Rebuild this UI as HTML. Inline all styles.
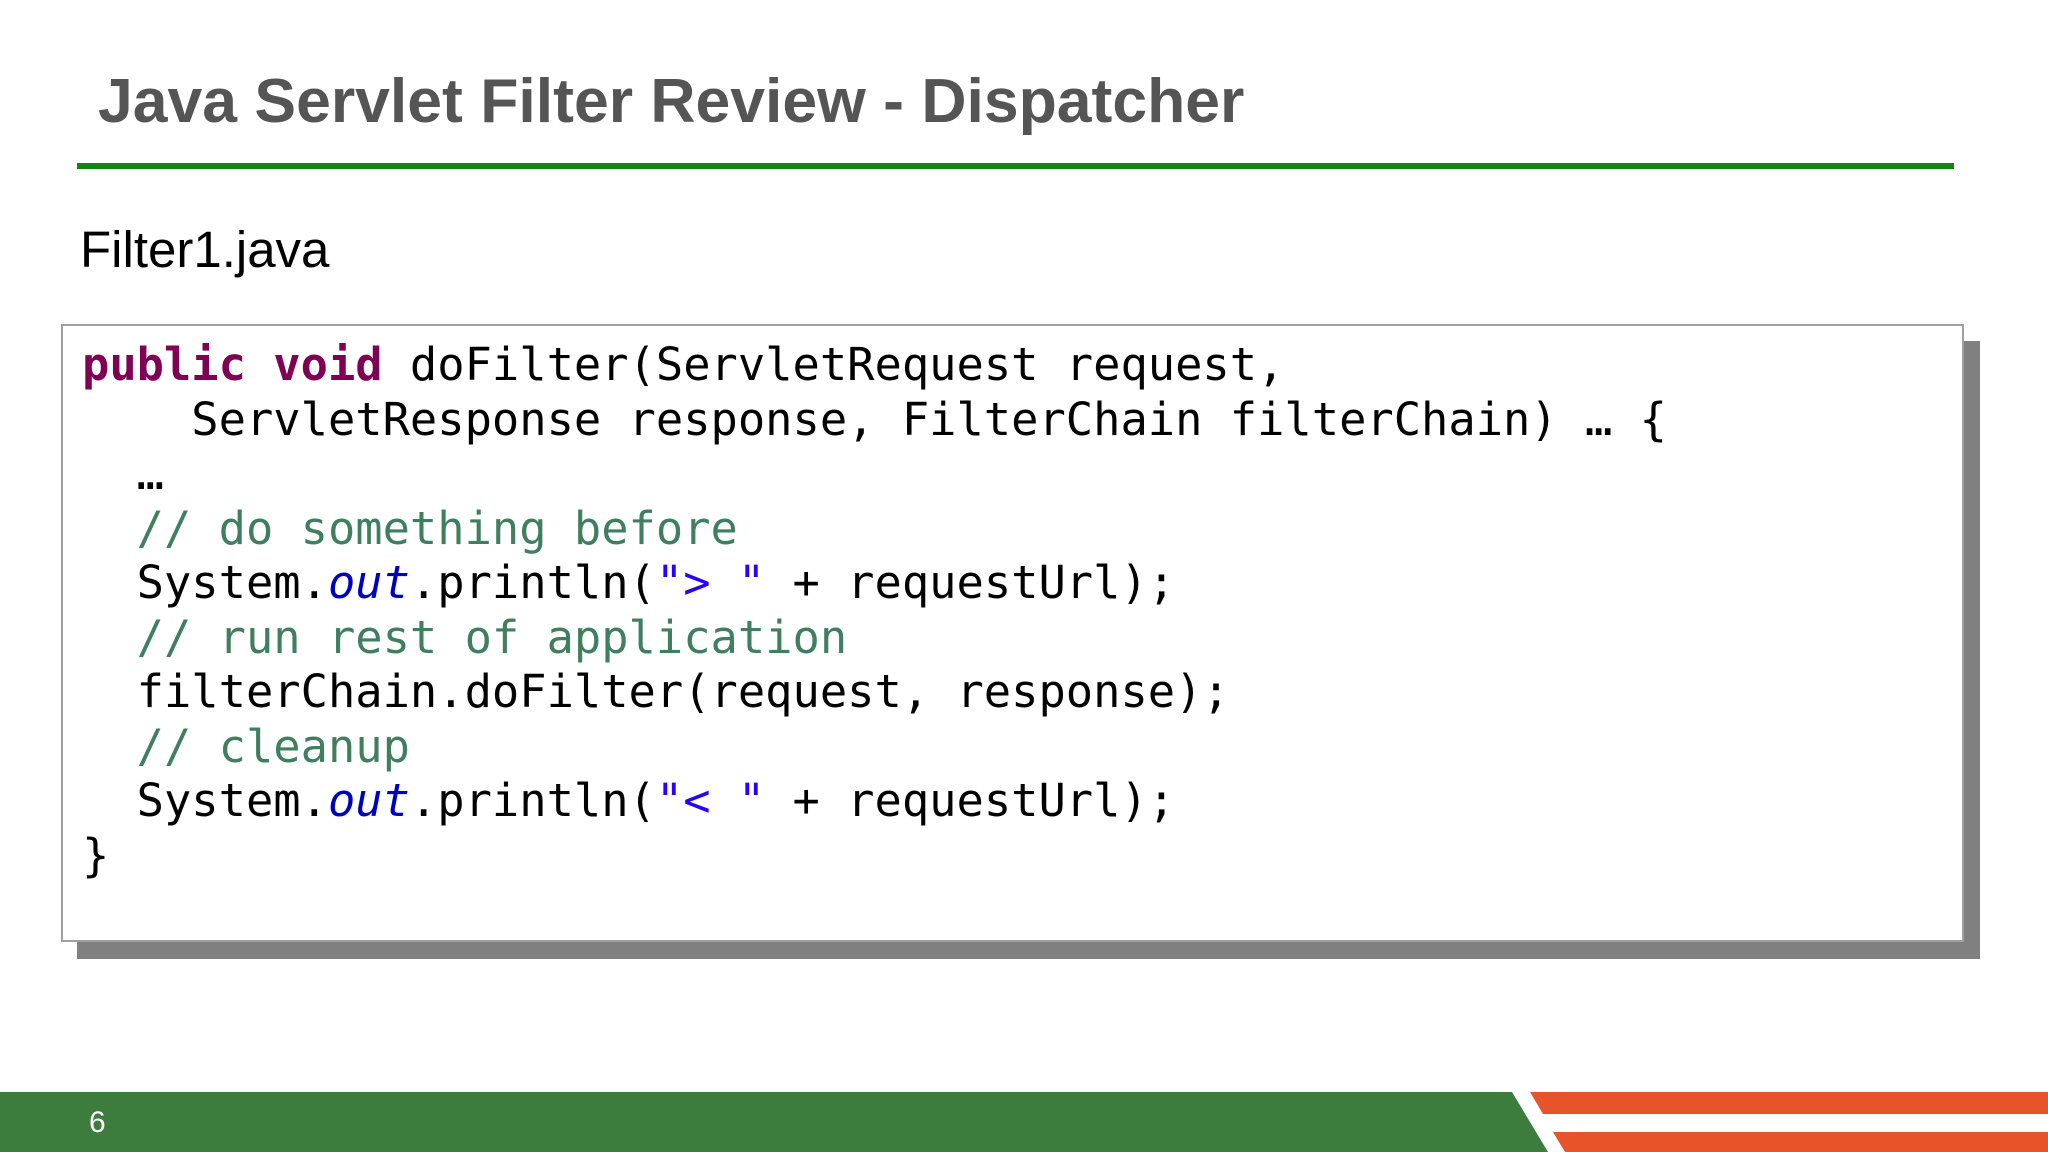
<!DOCTYPE html>
<html><head><meta charset="utf-8"><style>
html,body{margin:0;padding:0;background:#fff;}
body{width:2048px;height:1152px;position:relative;overflow:hidden;}
.title{position:absolute;left:98px;top:70px;font:bold 62.5px "Liberation Sans",sans-serif;color:#555;white-space:nowrap;line-height:1;}
.rule{position:absolute;left:77px;top:163px;width:1877px;height:6px;background:#138513;}
.sub{position:absolute;left:80px;top:224px;font:51px "Liberation Sans",sans-serif;color:#000;line-height:1;}
.shadow{position:absolute;left:77px;top:341px;width:1903px;height:618px;background:#808080;}
.box{position:absolute;left:61px;top:324px;width:1899px;height:614px;background:#fff;border:2px solid #a0a0a0;}
pre{position:absolute;left:82px;top:338px;margin:0;font:45.4px "DejaVu Sans Mono",monospace;line-height:54.5px;color:#000;}
.k{color:#7f0055;font-weight:bold;}
.c{color:#3f7f5f;}
.s{color:#2a00ff;}
.o{color:#0000c0;font-style:italic;}
.foot{position:absolute;left:0;top:1092px;width:2048px;height:60px;}
.num{position:absolute;left:89px;top:1106px;font:30px "Liberation Sans",sans-serif;color:#fff;}
</style></head><body>
<div class="title">Java Servlet Filter Review - Dispatcher</div>
<div class="rule"></div>
<div class="sub">Filter1.java</div>
<div class="shadow"></div>
<div class="box"></div>
<pre><span class="k">public</span> <span class="k">void</span> doFilter(ServletRequest request,
    ServletResponse response, FilterChain filterChain) … {
  …
  <span class="c">// do something before</span>
  System.<span class="o">out</span>.println(<span class="s">"&gt; "</span> + requestUrl);
  <span class="c">// run rest of application</span>
  filterChain.doFilter(request, response);
  <span class="c">// cleanup</span>
  System.<span class="o">out</span>.println(<span class="s">"&lt; "</span> + requestUrl);
}</pre>
<svg class="foot" width="2048" height="60" viewBox="0 0 2048 60">
<polygon points="0,0 1512,0 1548,60 0,60" fill="#3c7d3e"/>
<polygon points="1530,0 2048,0 2048,22 1543,22" fill="#e8542a"/>
<polygon points="1553,40 2048,40 2048,60 1565,60" fill="#e8542a"/>
</svg>
<div class="num">6</div>
</body></html>
